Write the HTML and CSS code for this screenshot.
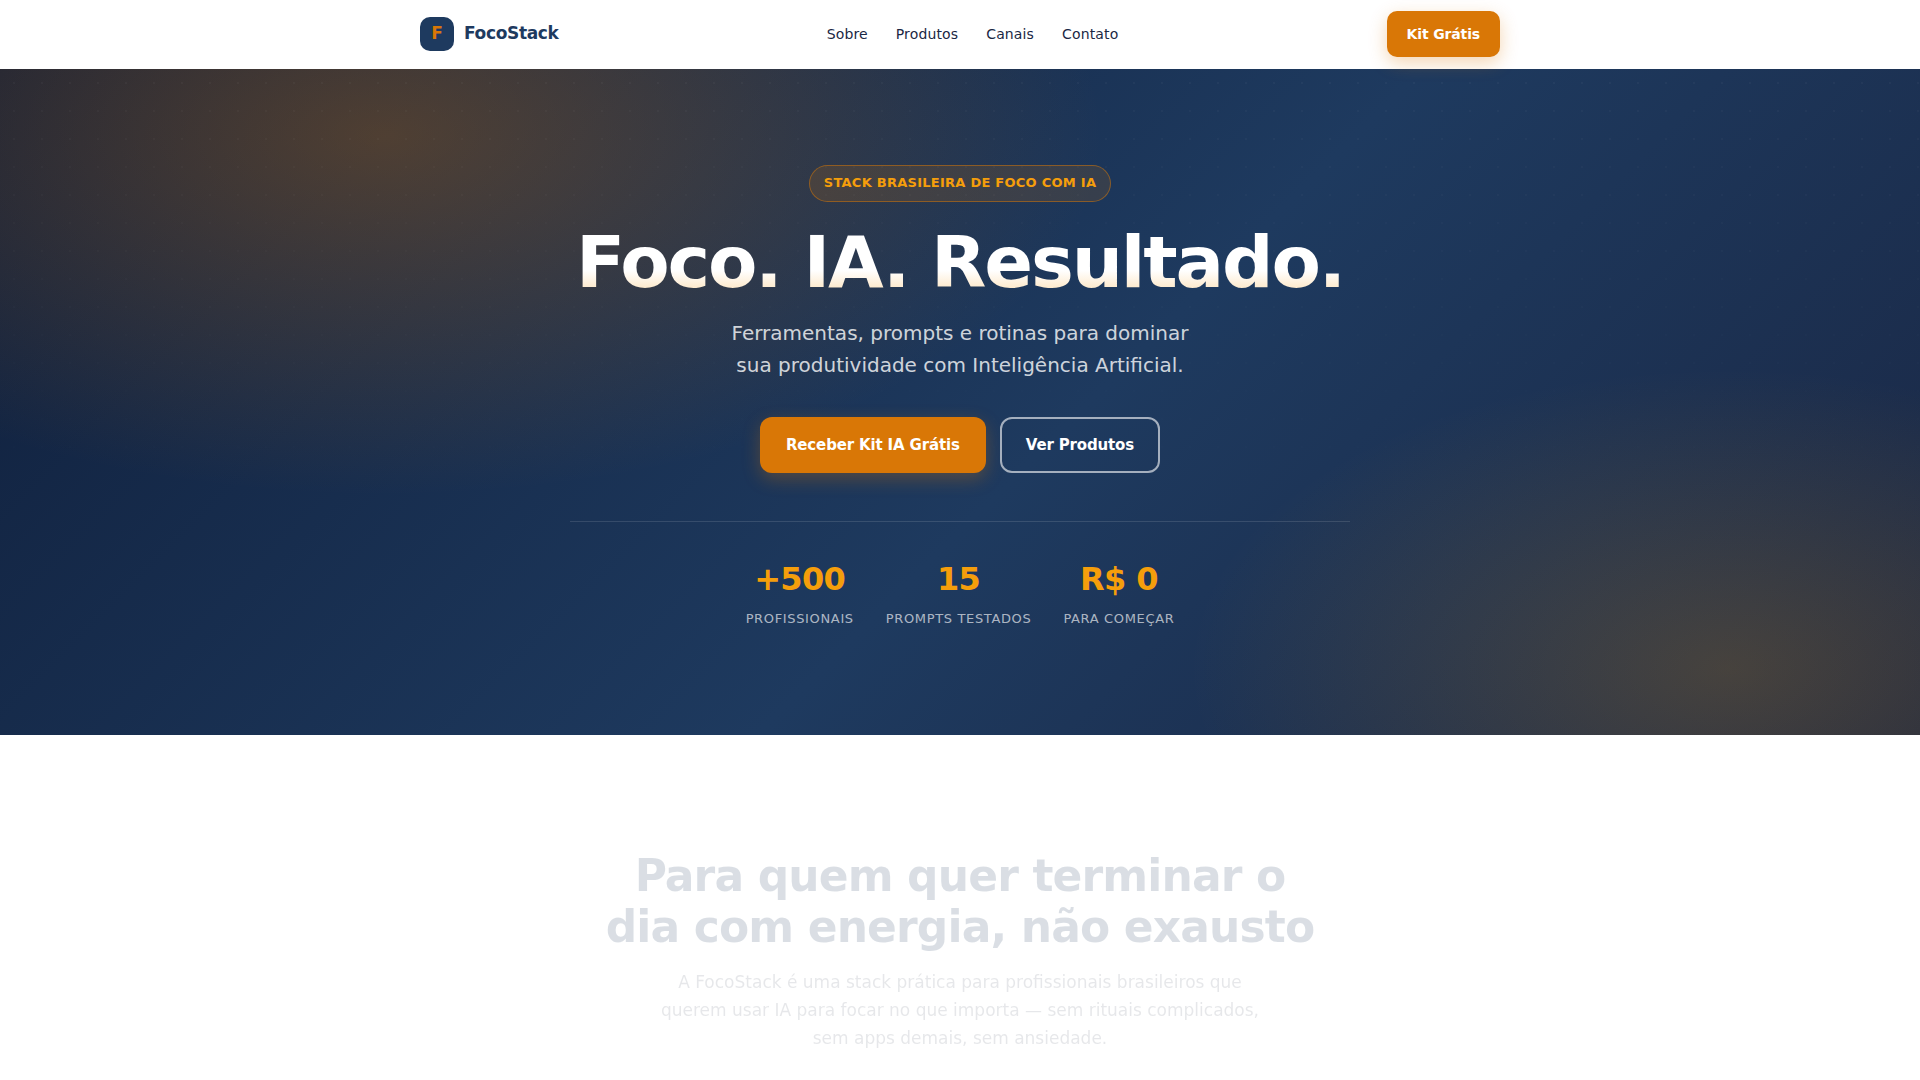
FILE: index.html
```html
<!DOCTYPE html>
<html lang="pt-BR">
<head>
<meta charset="utf-8">
<meta name="viewport" content="width=device-width, initial-scale=1">
<title>FocoStack</title>
<link rel="stylesheet" href="styles.css">
</head>
<body>
<header class="site-header">
  <div class="header-inner">
    <a class="brand" href="#inicio"><span class="brand-mark">F</span><span>FocoStack</span></a>
    <nav class="nav" aria-label="Principal">
      <a href="#sobre">Sobre</a>
      <a href="#produtos">Produtos</a>
      <a href="#canais">Canais</a>
      <a href="#contato">Contato</a>
    </nav>
    <button class="btn btn-primary btn-small" type="button">Kit Grátis</button>
  </div>
</header>
<main>
  <section class="hero" id="inicio">
    <div class="hero-inner">
      <span class="badge">Stack brasileira de foco com IA</span>
      <h1>Foco. IA. Resultado.</h1>
      <p class="lead">Ferramentas, prompts e rotinas para dominar sua produtividade com Inteligência Artificial.</p>
      <div class="actions">
        <button class="btn btn-primary" type="button">Receber Kit IA Grátis</button>
        <button class="btn btn-outline" type="button">Ver Produtos</button>
      </div>
      <dl class="stats">
        <div class="stat"><dt>Profissionais</dt><dd>+500</dd></div>
        <div class="stat"><dt>Prompts testados</dt><dd>15</dd></div>
        <div class="stat"><dt>Para começar</dt><dd>R$ 0</dd></div>
      </dl>
    </div>
  </section>
  <section class="about" id="sobre">
    <div class="about-inner">
      <h2>Para quem quer terminar o dia com energia, não exausto</h2>
      <p>A FocoStack é uma stack prática para profissionais brasileiros que querem usar IA para focar no que importa — sem rituais complicados, sem apps demais, sem ansiedade.</p>
    </div>
  </section>
</main>
</body>
</html>
```
FILE: styles.css
```css
:root {
  --navy: #1e3a5f;
  --ink: #1a2744;
  --orange: #d97706;
  --amber: #f59e0b;
}

* { box-sizing: border-box; }

body {
  margin: 0;
  background: #fff;
  color: var(--ink);
  font-family: "DejaVu Sans", sans-serif;
  font-size: 16px;
  line-height: 1.6;
}

a { color: inherit; text-decoration: none; }
h1, h2, p, dl, dd { margin: 0; }

.site-header {
  position: relative;
  z-index: 1;
  padding: 0 24px;
  background: #fff;
}

.header-inner {
  display: flex;
  align-items: center;
  justify-content: space-between;
  max-width: 1080px;
  margin: 0 auto;
  padding: 11px 0 12px;
}

.brand {
  display: flex;
  align-items: center;
  gap: 10px;
  color: var(--navy);
  font-size: 17px;
  font-weight: 700;
  letter-spacing: -0.02em;
}

.brand-mark {
  display: grid;
  place-items: center;
  width: 34px;
  height: 34px;
  border-radius: 10px;
  background: var(--navy);
  color: var(--orange);
}

.nav {
  display: flex;
  gap: 28px;
  font-size: 14px;
  letter-spacing: 0.01em;
}

.btn {
  border: 0;
  border-radius: 12px;
  padding: 16px 26px;
  color: #fff;
  font: 700 15px/24px "DejaVu Sans", sans-serif;
  letter-spacing: -0.01em;
  cursor: pointer;
}

.btn-primary {
  background: var(--orange);
  box-shadow: 0 6px 18px rgba(217, 119, 6, 0.3);
}

.btn-small { padding: 11px 20px; font-size: 14px; border-radius: 10px; }

.btn-outline {
  border: 2px solid rgba(255, 255, 255, 0.6);
  padding: 14px 24px;
  background: transparent;
}

.hero {
  position: relative;
  isolation: isolate;
  padding: 96px 24px 105px;
  background:
    radial-gradient(1200px 600px at 20% 10%, rgba(217, 119, 6, 0.3), transparent 60%),
    radial-gradient(900px 500px at 90% 90%, rgba(245, 158, 11, 0.2), transparent 60%),
    linear-gradient(135deg, #0f1e3a 0%, #1e3a5f 55%, #1a2744 100%);
  color: #fff;
  text-align: center;
}

/* Dot grid that fades out down the hero */
.hero::before {
  content: "";
  position: absolute;
  inset: 0;
  z-index: -1;
  background: radial-gradient(circle, rgba(255, 255, 255, 0.03) 1px, transparent 1px) 0 0 / 28px 28px;
  -webkit-mask-image: linear-gradient(#000, transparent 70%);
  mask-image: linear-gradient(#000, transparent 70%);
}

.hero-inner { max-width: 780px; margin: 0 auto; }

.badge {
  display: inline-block;
  padding: 7px 14px;
  border: 1px solid rgba(217, 119, 6, 0.5);
  border-radius: 20px;
  background: rgba(217, 119, 6, 0.15);
  color: var(--amber);
  font-size: 13px;
  font-weight: 700;
  letter-spacing: 0.02em;
  text-transform: uppercase;
}

h1 {
  margin: 21px 0 15px;
  background: linear-gradient(180deg, #fff 60%, #fcd9a5 100%);
  background-clip: text;
  -webkit-background-clip: text;
  color: transparent;
  font-size: 72px;
  line-height: 79px;
  letter-spacing: -0.03em;
}

.lead {
  max-width: 480px;
  margin: 0 auto 36px;
  color: rgba(255, 255, 255, 0.8);
  font-size: 20px;
}

.actions { display: flex; justify-content: center; gap: 14px; }

.stats {
  display: flex;
  justify-content: center;
  gap: 32px;
  margin-top: 48px;
  padding-top: 32px;
  border-top: 1px solid rgba(255, 255, 255, 0.12);
}

.stat {
  display: flex;
  flex-direction: column-reverse;
  gap: 4px;
}

.stat dt {
  color: rgba(255, 255, 255, 0.65);
  font-size: 13px;
  letter-spacing: 0.05em;
  text-transform: uppercase;
}

.stat dd {
  color: var(--amber);
  font-size: 32px;
  font-weight: 700;
  letter-spacing: -0.02em;
}

.about {
  padding: 115px 24px 0;
  text-align: center;
}

.about-inner {
  max-width: 720px;
  margin: 0 auto;
  opacity: 0.16;
}

h2 {
  margin-bottom: 16px;
  color: var(--navy);
  font-size: 44px;
  line-height: 51px;
  letter-spacing: -0.02em;
}

.about p {
  max-width: 620px;
  margin: 0 auto;
  color: #6b7280;
  font-size: 17px;
  line-height: 28px;
}
```
